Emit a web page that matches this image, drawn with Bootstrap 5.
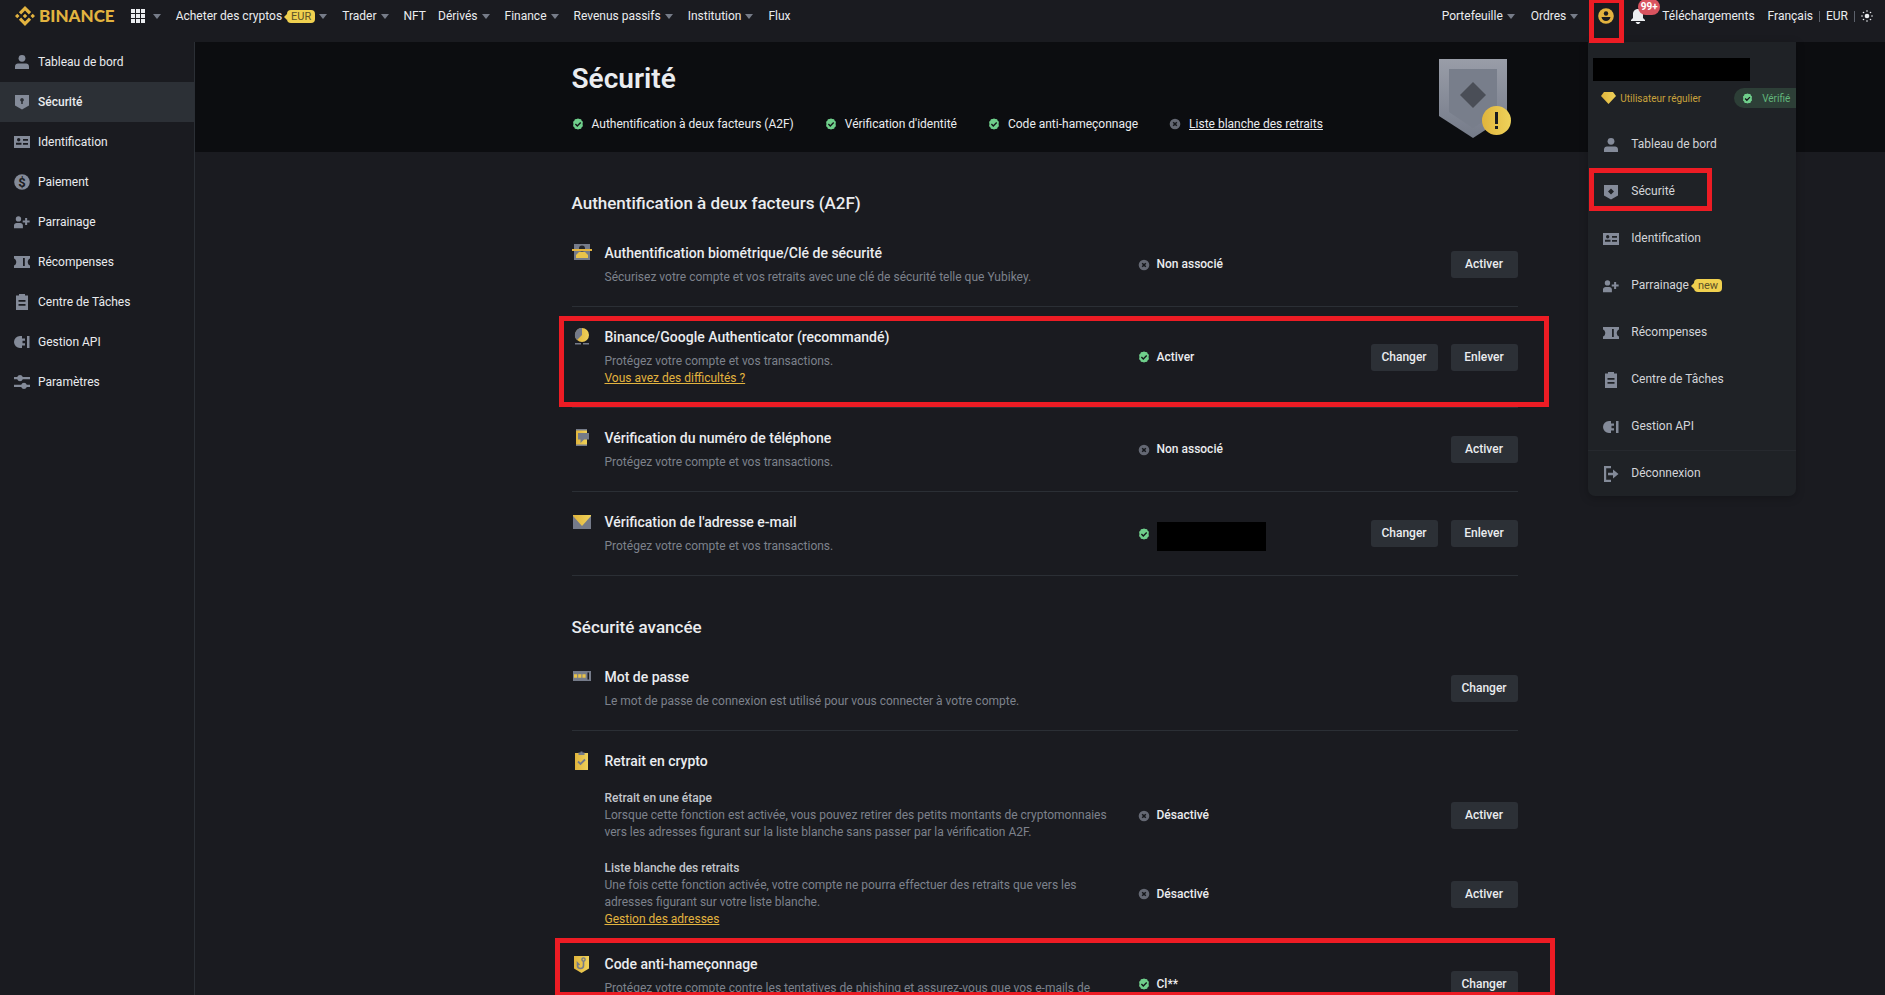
<!DOCTYPE html>
<html lang="fr">
<head>
<meta charset="utf-8">
<meta name="viewport" content="width=device-width, initial-scale=1">
<title>Sécurité</title>
<link href="https://cdn.jsdelivr.net/npm/bootstrap@5.3.0/dist/css/bootstrap.min.css" rel="stylesheet">
<style>
:root{--bg:#1a1b20;--deep:#0c0d10;--line:#2b2f35;--panel:#1f2226;--txt:#eaecef;--muted:#7d828c;--icon:#848b99;--gold:#e2b33f;--hi:#ed1c24}
body{background:var(--bg);color:var(--txt);font-family:Roboto,"Liberation Sans",sans-serif;font-size:12px;line-height:17px;height:100vh;overflow:hidden}
svg{display:block;flex:none}
a{color:inherit;text-decoration:none}
.topbar{height:42px;padding:0 12px 10px 15px;position:relative;z-index:5;white-space:nowrap}
.brand{color:var(--gold);font:900 17px/20px Lato,sans-serif;gap:4px;margin-right:16px}
.menu-list{gap:12px}
.menu-user{gap:13px}
.locale{gap:6px}
.caret{width:0;height:0;border:4px solid transparent;border-top:5px solid #767c88;border-bottom:0;margin:0 3px 0 4px}
.tag{background:#efd04f;color:#5c5128;font-size:11px;line-height:13px;border-radius:4px;padding:0 4px;font-weight:400;position:relative;margin-left:5px}
.tag::before{content:"";position:absolute;left:-3px;top:4px;border:3px solid transparent;border-right-color:#efd04f;border-left:0}
.bar{width:1px;height:11px;background:#5c616b}
.icon-btn{background:none;border:0;padding:0;color:var(--txt)}
.count{position:absolute;top:-9px;left:7px;background:#d9535f;border-radius:9px;font-size:10px;line-height:16px;width:22px;text-align:center;color:#fff;font-weight:700}
.outline{position:absolute;border:5px solid var(--hi);pointer-events:none}
.outline-account{left:-9px;top:-10px;width:35px;height:45px}
.outline-item{left:1px;top:0;width:123px;height:43px}
.outline-row{left:-13px;right:-31px;top:9px;bottom:0}
.outline-code{left:-17px;right:-37px;top:4px;height:59px}
.account-menu{position:absolute;left:-10px;top:34px;width:208px;background:var(--panel);border-radius:0 0 7px 7px;color:#d3d5d9;overflow:hidden;box-shadow:0 2px 8px rgba(0,0,0,.25);padding-top:16px}
.redacted{background:#000}
.account-name{width:157px;height:23px;margin-left:5px}
.tier{height:20px;margin:7px 0 13px 13px;color:#c9a23c;font-size:10px}
.verified{background:#2d3f37;color:#62b67b;border-radius:10px 0 0 10px;height:20px;padding:0 6px 0 8px;gap:9px}
.account-menu a{height:47px;gap:12px;padding-left:15px;position:relative}
.account-menu svg,.side svg{color:var(--icon)}
.account-menu .divided{height:46px;border-top:1px solid #26292e}
.shell{height:calc(100vh - 42px)}
.side{width:195px;flex:none;border-right:1px solid var(--line)}
.side a{height:40px;padding-left:14px;gap:8px}
.side a.active{background:#2c3036;font-weight:500}
.hero{background:var(--deep);padding:20px 0 20px 9px}
.page-body{padding-left:9px}
.inner{max-width:946px;margin:0 auto}
h1{font-size:28px;line-height:34px;margin:0 0 20px;font-weight:600}
h2{font-size:17px;line-height:24px;margin:39px 0 8px;font-weight:500}
h3{font-size:14px;line-height:21px;margin:0 0 5px;font-weight:500}
h4{font-size:12px;line-height:17px;margin:0;color:#c3c6cc;font-weight:500}
p{margin:0;color:var(--muted)}
.checks{gap:31px;line-height:16px}
.checks>*{gap:8px}
.emblem{margin:-3px 6px -9px 0}
.setting{padding:20px 0;border-bottom:1px solid var(--line);position:relative}
.glyph{width:33px;flex:none;align-self:flex-start}
.what{flex:1 1 0;min-width:0;padding-right:24px}
.state{width:233px;flex:none;gap:7px;font-weight:500}
.acts{width:147px;flex:none;gap:13px}
.act{background:#2c3036;border:0;border-radius:3px;color:var(--txt);font-size:12px;font-weight:500;width:67px;height:27px;padding:0}
.gold-link{color:var(--gold);text-decoration:underline}
.group{padding-bottom:6px;border:0}
.group-title{margin-bottom:18px}
.sub-setting + .sub-setting{margin-top:19px}
.mail-mask{width:109px;height:29px;margin-top:6px}
</style>
</head>
<body>
<svg width="0" height="0" class="position-absolute" aria-hidden="true">
<defs>
<linearGradient id="g-gold" x1="0" x2="1"><stop stop-color="#e0b43c"/><stop offset="1" stop-color="#efd25a"/></linearGradient>
<linearGradient id="g-steel" x1="0" x2="0" y1="0" y2="1"><stop stop-color="#999da8"/><stop offset="1" stop-color="#757b89"/></linearGradient>
<symbol id="i-user" viewBox="0 0 16 16"><circle cx="8" cy="4.3" r="3.4"/><path d="M1 15v-2.4C1 10.700 2.300 9.500 4 9.500h8c1.700 0 3 1.200 3 3.100V15z"/></symbol>
<symbol id="i-lock" viewBox="0 0 16 16"><path fill-rule="evenodd" d="M1 1h14v10.500L8 15.500 1 11.500zM8 4a1.900 1.900 0 0 0-.8 3.600V10h1.600V7.600A1.900 1.900 0 0 0 8 4z"/></symbol>
<symbol id="i-shield" viewBox="0 0 16 16"><path fill-rule="evenodd" d="M1 1h14v10.500L8 15.500 1 11.500zM8 4.500L5 7.500l3 3 3-3z"/></symbol>
<symbol id="i-id" viewBox="0 0 16 16"><path fill-rule="evenodd" d="M0 2h16v12H0zM4.700 4a1.700 1.700 0 1 0 0 3.400 1.700 1.700 0 0 0 0-3.400zM2 8.700v2h5.500v-2zM9 5v1.700h5V5zM9 9v1.700h5V9z"/></symbol>
<symbol id="i-money" viewBox="0 0 16 16"><circle cx="8" cy="8" r="7.800"/><text x="8" y="12.500" text-anchor="middle" font-size="13" font-weight="700" fill="#1a1b20">$</text></symbol>
<symbol id="i-add" viewBox="0 0 18 16"><circle cx="5" cy="4.500" r="3"/><path d="M0 15v-3C0 10.300 1.300 9 3 9h4c1.700 0 3 1.300 3 3v3zM12.500 3.500h2.300v2.800h2.800v2.300h-2.800v2.800h-2.300V8.600H9.800V6.300h2.700z"/></symbol>
<symbol id="i-ticket" viewBox="0 0 16 16"><path fill-rule="evenodd" d="M0 2h16v2.500c-3 1-3 6 0 7V14H0v-2.500c3-1 3-6 0-7zM9 4v8h1.800V4z"/></symbol>
<symbol id="i-clip" viewBox="0 0 16 16"><path fill-rule="evenodd" d="M5 0h6v1.500h3V16H2V1.500h3zM4.500 6v1.700h7V6zM4.500 10v1.700h7V10z"/></symbol>
<symbol id="i-api" viewBox="0 0 16 16"><path d="M8 2v2.500h3v2.300H8.500v2.400H11v2.300H8V14H6A6 6 0 0 1 6 2zM13 2h2.500v12H13z"/></symbol>
<symbol id="i-tune" viewBox="0 0 16 16"><path d="M0 3h3.200a3 3 0 0 1 5.600 0H16v2.300H8.800a3 3 0 0 1-5.600 0H0zM0 10.700h7.200a3 3 0 0 1 5.600 0H16V13h-3.200a3 3 0 0 1-5.600 0H0z"/></symbol>
<symbol id="i-out" viewBox="0 0 16 16"><path d="M1 0h7v2.200H3.200v11.600H8V16H1zM5 6.800h5V3.500L15.500 8 10 12.500V9.200H5z"/></symbol>
<symbol id="i-ok" viewBox="0 0 12 12"><path fill="#6fcf8b" d="M6 .5l1.500.6 1.600.1.600 1.500 1.200 1L10.600 6l.3 2.300-1.200 1-.6 1.500-1.600.1L6 11.500l-1.500-.6-1.600-.1-.6-1.500-1.200-1L1.400 6l-.3-2.300 1.200-1 .6-1.500 1.600-.1z"/><path d="M3.400 6l1.900 1.900 3.400-3.400" fill="none" stroke="#14161a" stroke-width="1.400"/></symbol>
<symbol id="i-no" viewBox="0 0 12 12"><circle cx="6" cy="6" r="5.300" fill="#646873"/><path d="M4.200 4.200l3.600 3.600M7.800 4.200L4.200 7.800" stroke="#14161a" stroke-width="1.500"/></symbol>
</defs>
</svg>

<header class="topbar d-flex align-items-center">
  <a href="#" class="brand d-flex align-items-center"><svg width="20" height="20" viewBox="0 0 24 24" fill="currentColor" aria-hidden="true"><path d="M16.624 13.9202l2.7175 2.7154-7.353 7.353-7.353-7.352 2.7175-2.7164 4.6355 4.6595 4.6356-4.6595zm4.6366-4.6366L24 12l-2.7154 2.7164L18.5682 12l2.6924-2.7164zm-9.272.001l2.7163 2.6914-2.7164 2.7174v-.001L9.2721 12l2.7164-2.7154zm-9.2722-.001L5.4088 12l-2.6914 2.6924L0 12l2.7164-2.7164zM11.9885.0115l7.353 7.329-2.7174 2.7154-4.6356-4.6356-4.6355 4.6595-2.7174-2.7154 7.353-7.353z"/></svg><span>BINANCE</span></a>
  <nav class="menu-list d-flex align-items-center flex-grow-1" aria-label="Principal">
    <button class="icon-btn d-flex align-items-center" aria-label="Applications"><svg width="14" height="14" viewBox="0 0 14 14" fill="#eaecef"><path d="M0 0h4v4H0zM5 0h4v4H5zM10 0h4v4h-4zM0 5h4v4H0zM5 5h4v4H5zM10 5h4v4h-4zM0 10h4v4H0zM5 10h4v4H5zM10 10h4v4h-4z"/></svg><i class="caret ms-2"></i></button>
    <a href="#" class="d-flex align-items-center">Acheter des cryptos<span class="tag">EUR</span><i class="caret"></i></a>
    <a href="#" class="d-flex align-items-center">Trader<i class="caret"></i></a>
    <a href="#">NFT</a>
    <a href="#" class="d-flex align-items-center">Dérivés<i class="caret"></i></a>
    <a href="#" class="d-flex align-items-center">Finance<i class="caret"></i></a>
    <a href="#" class="d-flex align-items-center">Revenus passifs<i class="caret"></i></a>
    <a href="#" class="d-flex align-items-center">Institution<i class="caret"></i></a>
    <a href="#">Flux</a>
  </nav>
  <nav class="menu-user d-flex align-items-center" aria-label="Compte">
    <a href="#" class="d-flex align-items-center">Portefeuille<i class="caret"></i></a>
    <a href="#" class="d-flex align-items-center">Ordres<i class="caret"></i></a>
    <div class="position-relative ms-1">
      <button class="icon-btn d-block" aria-label="Compte"><svg width="16" height="16" viewBox="0 0 16 16"><circle cx="8" cy="8" r="7.800" fill="#e2b33f"/><circle cx="8" cy="5.500" r="2.200" fill="#1a1b20"/><path d="M3.500 9h9c-.5 2.500-2.300 4-4.500 4S4 11.500 3.500 9z" fill="#1a1b20"/></svg></button>
      <div class="account-menu">
        <div class="account-name redacted"></div>
        <div class="tier d-flex align-items-center justify-content-between"><span class="d-flex align-items-center gap-1"><svg width="15" height="12" viewBox="0 0 15 12"><path fill="url(#g-gold)" d="M3 0h9l3 4-7.500 8L0 4z"/></svg>Utilisateur régulier</span><span class="verified d-flex align-items-center"><svg width="11" height="11"><use href="#i-ok"/></svg>Vérifié</span></div>
        <a href="#" class="d-flex align-items-center"><svg width="16" height="16" fill="currentColor"><use href="#i-user"/></svg>Tableau de bord</a>
        <a href="#" class="d-flex align-items-center"><svg width="16" height="16" fill="currentColor"><use href="#i-shield"/></svg>Sécurité<span class="outline outline-item"></span></a>
        <a href="#" class="d-flex align-items-center"><svg width="16" height="16" fill="currentColor"><use href="#i-id"/></svg>Identification</a>
        <a href="#" class="d-flex align-items-center"><svg width="16" height="16" fill="currentColor"><use href="#i-add"/></svg><span class="d-flex align-items-center">Parrainage<span class="tag">new</span></span></a>
        <a href="#" class="d-flex align-items-center"><svg width="16" height="16" fill="currentColor"><use href="#i-ticket"/></svg>Récompenses</a>
        <a href="#" class="d-flex align-items-center"><svg width="16" height="16" fill="currentColor"><use href="#i-clip"/></svg>Centre de Tâches</a>
        <a href="#" class="d-flex align-items-center"><svg width="16" height="16" fill="currentColor"><use href="#i-api"/></svg>Gestion API</a>
        <a href="#" class="divided d-flex align-items-center"><svg width="16" height="16" fill="currentColor"><use href="#i-out"/></svg>Déconnexion</a>
      </div>
      <span class="outline outline-account"></span>
    </div>
    <button class="icon-btn position-relative ms-1" aria-label="Notifications"><svg width="14" height="16" viewBox="0 0 14 16" fill="#eaecef"><path d="M7 1c3 0 5 2.200 5 5v4l2 2v1H0v-1l2-2V6c0-2.800 2-5 5-5zM4.500 14h5L8 16H6z"/></svg><span class="count">99+</span></button>
    <a href="#" class="ms-1">Téléchargements</a>
    <div class="locale d-flex align-items-center"><a href="#">Français</a><i class="bar"></i><a href="#">EUR</a><i class="bar"></i>
    <button class="icon-btn" aria-label="Thème"><svg width="12" height="12" viewBox="0 0 12 12" fill="#eaecef"><circle cx="6" cy="6" r="2.300"/><circle cx="6" cy="1" r=".8"/><circle cx="6" cy="11" r=".8"/><circle cx="1" cy="6" r=".8"/><circle cx="11" cy="6" r=".8"/><circle cx="2.500" cy="2.500" r=".8"/><circle cx="9.500" cy="2.500" r=".8"/><circle cx="2.500" cy="9.500" r=".8"/><circle cx="9.500" cy="9.500" r=".8"/></svg></button></div>
  </nav>
</header>

<div class="shell d-flex overflow-hidden">
  <nav class="side" aria-label="Compte utilisateur">
    <a href="#" class="d-flex align-items-center"><svg width="16" height="16" fill="currentColor"><use href="#i-user"/></svg>Tableau de bord</a>
    <a href="#" class="active d-flex align-items-center" aria-current="page"><svg width="16" height="16" fill="currentColor"><use href="#i-lock"/></svg>Sécurité</a>
    <a href="#" class="d-flex align-items-center"><svg width="16" height="16" fill="currentColor"><use href="#i-id"/></svg>Identification</a>
    <a href="#" class="d-flex align-items-center"><svg width="16" height="16" fill="currentColor"><use href="#i-money"/></svg>Paiement</a>
    <a href="#" class="d-flex align-items-center"><svg width="16" height="16" fill="currentColor"><use href="#i-add"/></svg>Parrainage</a>
    <a href="#" class="d-flex align-items-center"><svg width="16" height="16" fill="currentColor"><use href="#i-ticket"/></svg>Récompenses</a>
    <a href="#" class="d-flex align-items-center"><svg width="16" height="16" fill="currentColor"><use href="#i-clip"/></svg>Centre de Tâches</a>
    <a href="#" class="d-flex align-items-center"><svg width="16" height="16" fill="currentColor"><use href="#i-api"/></svg>Gestion API</a>
    <a href="#" class="d-flex align-items-center"><svg width="16" height="16" fill="currentColor"><use href="#i-tune"/></svg>Paramètres</a>
  </nav>

  <main class="flex-grow-1">
    <div class="hero">
      <div class="inner d-flex justify-content-between">
        <div>
          <h1>Sécurité</h1>
          <div class="checks d-flex">
            <span class="d-flex align-items-center"><svg width="12" height="12"><use href="#i-ok"/></svg>Authentification à deux facteurs (A2F)</span>
            <span class="d-flex align-items-center"><svg width="12" height="12"><use href="#i-ok"/></svg>Vérification d'identité</span>
            <span class="d-flex align-items-center"><svg width="12" height="12"><use href="#i-ok"/></svg>Code anti-hameçonnage</span>
            <span class="d-flex align-items-center"><svg width="12" height="12"><use href="#i-no"/></svg><a href="#" class="text-decoration-underline">Liste blanche des retraits</a></span>
          </div>
        </div>
        <svg class="emblem" width="74" height="80" viewBox="0 0 74 80" aria-hidden="true"><path fill="url(#g-steel)" d="M1 0h68v57L35 79 1 57z"/><path fill="#787e8b" d="M11 10h48v43L35 69 11 53z"/><path fill="#4a4e57" d="M35 23l13 13-13 13-13-13z"/><circle cx="58.500" cy="61.500" r="14.500" fill="url(#g-gold)"/><path fill="#1a1b20" d="M57 53h3v12h-3zM57 67h3v3h-3z"/></svg>
      </div>
    </div>

    <div class="page-body">
    <div class="inner">
      <h2>Authentification à deux facteurs (A2F)</h2>
      <section class="setting d-flex align-items-center">
        <div class="glyph"><svg width="20" height="20" viewBox="0 0 20 20"><path fill="#757b89" d="M2 1h16v16H2z"/><circle cx="10" cy="5.500" r="3" fill="#23252b"/><path fill="#e9c34a" d="M4 15v-3l3-3h6l3 3v3z"/><path fill="#e2b33f" d="M0 6h20v2H0z"/></svg></div>
        <div class="what"><h3>Authentification biométrique/Clé de sécurité</h3><p>Sécurisez votre compte et vos retraits avec une clé de sécurité telle que Yubikey.</p></div>
        <div class="state d-flex align-items-center"><svg width="12" height="12"><use href="#i-no"/></svg>Non associé</div>
        <div class="acts d-flex justify-content-end"><button class="act">Activer</button></div>
      </section>
      <section class="setting d-flex align-items-center">
        <div class="glyph"><svg width="20" height="20" viewBox="0 0 20 20"><circle cx="10" cy="8" r="7" fill="url(#g-gold)"/><path fill="#757b89" d="M10 8V1a7 7 0 0 0-5 12zM3 16h6v1.500H3zM11 16h6v1.500h-6z"/></svg></div>
        <div class="what"><h3>Binance/Google Authenticator (recommandé)</h3><p>Protégez votre compte et vos transactions.</p><a href="#" class="gold-link d-block">Vous avez des difficultés ?</a></div>
        <div class="state d-flex align-items-center"><svg width="12" height="12"><use href="#i-ok"/></svg>Activer</div>
        <div class="acts d-flex justify-content-end"><button class="act">Changer</button><button class="act">Enlever</button></div>
        <span class="outline outline-row"></span>
      </section>
      <section class="setting d-flex align-items-center">
        <div class="glyph"><svg width="20" height="20" viewBox="0 0 20 20"><path fill="url(#g-gold)" d="M4 1h11v17H4z"/><path fill="#757b89" d="M4 1h11v1.500H4zM4 16.500h11V18H4zM6 5h11v6.500h-5L8.500 15v-3.500H6z"/></svg></div>
        <div class="what"><h3>Vérification du numéro de téléphone</h3><p>Protégez votre compte et vos transactions.</p></div>
        <div class="state d-flex align-items-center"><svg width="12" height="12"><use href="#i-no"/></svg>Non associé</div>
        <div class="acts d-flex justify-content-end"><button class="act">Activer</button></div>
      </section>
      <section class="setting d-flex align-items-center">
        <div class="glyph"><svg width="20" height="20" viewBox="0 0 20 20"><path fill="#757b89" d="M1 3h18v14H1z"/><path fill="url(#g-gold)" d="M1 3h18v1l-9 10L1 4z"/></svg></div>
        <div class="what"><h3>Vérification de l'adresse e-mail</h3><p>Protégez votre compte et vos transactions.</p></div>
        <div class="state d-flex align-items-center"><svg width="12" height="12"><use href="#i-ok"/></svg><span class="redacted mail-mask"></span></div>
        <div class="acts d-flex justify-content-end"><button class="act">Changer</button><button class="act">Enlever</button></div>
      </section>

      <h2>Sécurité avancée</h2>
      <section class="setting d-flex align-items-center">
        <div class="glyph"><svg width="20" height="20" viewBox="0 0 20 20"><path fill="#757b89" d="M1 4h18v10H1z"/><path fill="#e9c34a" d="M2 7.300h3.200v3.400H2zM6.200 7.300h3.200v3.400H6.200zM10.400 7.300h3.200v3.400h-3.200z"/><path fill="#1a1b20" d="M15.500 5.500H17v7h-1.500z"/></svg></div>
        <div class="what"><h3>Mot de passe</h3><p>Le mot de passe de connexion est utilisé pour vous connecter à votre compte.</p></div>
        <div class="state"></div>
        <div class="acts d-flex justify-content-end"><button class="act">Changer</button></div>
      </section>
      <section class="setting group d-flex">
        <div class="glyph"><svg width="20" height="20" viewBox="0 0 20 20"><path fill="url(#g-gold)" d="M3 2h13v17H3z"/><path fill="#757b89" d="M6.500 1.500h2V.5h2v1h2V4h-6z"/><path d="M6 10.500L8.500 13 13 8.500" fill="none" stroke="#757b89" stroke-width="1.800"/></svg></div>
        <div class="flex-grow-1">
          <h3 class="group-title">Retrait en crypto</h3>
          <div class="sub-setting d-flex align-items-center">
            <div class="what"><h4>Retrait en une étape</h4><p>Lorsque cette fonction est activée, vous pouvez retirer des petits montants de cryptomonnaies vers les adresses figurant sur la liste blanche sans passer par la vérification A2F.</p></div>
            <div class="state d-flex align-items-center"><svg width="12" height="12"><use href="#i-no"/></svg>Désactivé</div>
            <div class="acts d-flex justify-content-end"><button class="act">Activer</button></div>
          </div>
          <div class="sub-setting d-flex align-items-center">
            <div class="what"><h4>Liste blanche des retraits</h4><p>Une fois cette fonction activée, votre compte ne pourra effectuer des retraits que vers les adresses figurant sur votre liste blanche.</p><a href="#" class="gold-link d-block">Gestion des adresses</a></div>
            <div class="state d-flex align-items-center"><svg width="12" height="12"><use href="#i-no"/></svg>Désactivé</div>
            <div class="acts d-flex justify-content-end"><button class="act">Activer</button></div>
          </div>
        </div>
      </section>
      <section class="setting d-flex align-items-center">
        <div class="glyph"><svg width="20" height="20" viewBox="0 0 20 20"><path fill="url(#g-gold)" d="M2 2h15v12.500L9.500 19 2 14.500z"/><circle cx="11.500" cy="5.500" r="1.600" fill="none" stroke="#757b89" stroke-width="1.400"/><path d="M11.500 7v4.500a3 3 0 0 1-6 0V9l2 2" fill="none" stroke="#757b89" stroke-width="1.600"/></svg></div>
        <div class="what"><h3>Code anti-hameçonnage</h3><p>Protégez votre compte contre les tentatives de phishing et assurez-vous que vos e-mails de notification proviennent bien de Binance.</p></div>
        <div class="state d-flex align-items-center"><svg width="12" height="12"><use href="#i-ok"/></svg>Cl**</div>
        <div class="acts d-flex justify-content-end"><button class="act">Changer</button></div>
        <span class="outline outline-code"></span>
      </section>
    </div>
    </div>
  </main>
</div>
<script src="https://cdn.jsdelivr.net/npm/bootstrap@5.3.0/dist/js/bootstrap.bundle.min.js"></script>
</body>
</html>
